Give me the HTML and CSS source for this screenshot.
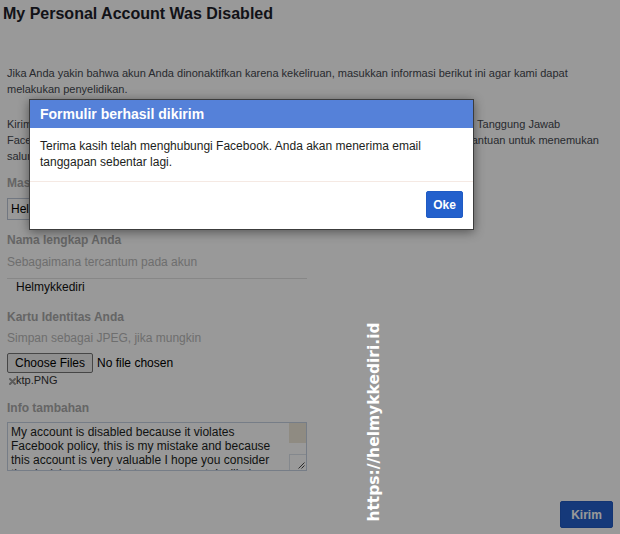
FILE: index.html
```html
<!DOCTYPE html>
<html lang="id">
<head>
<meta charset="utf-8">
<title>My Personal Account Was Disabled</title>
<link rel="stylesheet" href="styles.css">
</head>
<body>
<div class="page">
  <h1 class="title">My Personal Account Was Disabled</h1>
  <p class="intro">Jika Anda yakin bahwa akun Anda dinonaktifkan karena kekeliruan, masukkan informasi berikut ini agar kami dapat melakukan penyelidikan.</p>
  <p class="intro second">Kirimkan formulir ini hanya jika akun Anda dinonaktifkan karena melanggar Pernyataan Hak dan Tanggung Jawab<br>Facebook. Jika Anda tidak bisa masuk ke akun Anda karena alasan yang lain, kunjungi Pusat Bantuan untuk menemukan<br>saluran yang tepat untuk masalah Anda.</p>
  <form class="form">
    <div class="label first">Masukkan email atau nomor ponsel log in</div>
    <input class="text-input" type="text" value="Helmykkediri@gmail.com">
    <div class="label">Nama lengkap Anda</div>
    <div class="hint">Sebagaimana tercantum pada akun</div>
    <div class="plain-field">Helmykkediri</div>
    <div class="label gap-b">Kartu Identitas Anda</div>
    <div class="hint tight">Simpan sebagai JPEG, jika mungkin</div>
    <div class="file-row">
      <button type="button" class="file-btn">Choose Files</button>
      <span class="file-status">No file chosen</span>
    </div>
    <div class="attachment"><svg class="remove" width="7" height="7" viewBox="0 0 7 7"><path d="M1 1L6 6M6 1L1 6" stroke="#9a9a9a" stroke-width="2" stroke-linecap="round"/></svg>ktp.PNG</div>
    <div class="label gap-c">Info tambahan</div>
    <div class="textarea-wrap">
      <textarea class="textarea">My account is disabled because it violates Facebook policy, this is my mistake and because this account is very valuable I hope you consider the decision to reactivate my account, I will obey the rules.</textarea>
      <span class="scroll-thumb"></span>
      <span class="resize-grip"><svg width="16" height="15" viewBox="0 0 16 15"><path d="M8.5 13.5L14.5 7.5M11.5 13.5L14.5 10.5" stroke="#4a4a4a" stroke-width="1"/></svg></span>
    </div>
    <div class="actions"><button type="button" class="submit">Kirim</button></div>
  </form>
</div>

<div class="overlay"></div>

<div class="dialog">
  <div class="dialog-header">Formulir berhasil dikirim</div>
  <div class="dialog-body">Terima kasih telah menghubungi Facebook. Anda akan menerima email tanggapan sebentar lagi.</div>
  <div class="dialog-footer"><button type="button" class="ok">Oke</button></div>
</div>

<div class="watermark">https://helmykkediri.id</div>
</body>
</html>
```

FILE: styles.css
```css
html, body {
  margin: 0;
  padding: 0;
  background: #ffffff;
}

body {
  font-family: "Liberation Sans", Arial, sans-serif;
  font-size: 12px;
  line-height: 16px;
  color: #1d2129;
  width: 620px;
  height: 534px;
  overflow: hidden;
  position: relative;
}

.page {
  padding: 0 7px;
}

.title {
  margin: 0 0 0 -4px;
  padding-top: 4px;
  font-size: 16px;
  line-height: 19px;
  font-weight: bold;
  color: #1d2129;
}

.intro {
  margin: 42px 0 0;
  font-size: 11px;
  line-height: 16px;
  color: #44484f;
}

.intro.second {
  margin-top: 19px;
}

.form {
  margin: 0;
}

.label {
  margin-top: 12px;
  font-weight: bold;
  font-size: 12px;
  line-height: 16px;
  color: #a9a9a9;
}

.label.first {
  margin-top: 11px;
}

.label.gap-b {
  margin-top: 10px;
}

.label.gap-c {
  margin-top: 13px;
}

.hint {
  margin-top: 6px;
  font-size: 12px;
  line-height: 16px;
  color: #b8b8b8;
}

.hint.tight {
  margin-top: 5px;
}

.text-input {
  display: block;
  box-sizing: border-box;
  margin: 7px 0 0;
  width: 300px;
  height: 22px;
  padding: 0 3px;
  border: 1px solid #bdc7d8;
  border-radius: 0;
  font-family: "Liberation Sans", Arial, sans-serif;
  font-size: 12px;
  color: #000000;
  background: #ffffff;
  outline: none;
}

.plain-field {
  box-sizing: border-box;
  margin-top: 8px;
  width: 300px;
  padding: 0 0 4px 9px;
  border-top: 1px solid #e2e2e2;
  font-size: 12px;
  line-height: 16px;
  color: #111111;
}

.file-row {
  margin-top: 7px;
  display: flex;
  align-items: center;
  gap: 4px;
  height: 20px;
}

.file-btn {
  box-sizing: border-box;
  height: 20px;
  margin: 0;
  padding: 0 7px;
  border: 1px solid #767676;
  border-radius: 2px;
  background: #efefef;
  font-family: "Liberation Sans", Arial, sans-serif;
  font-size: 12px;
  line-height: 18px;
  color: #000000;
}

.file-status {
  font-size: 12px;
  color: #000000;
}

.attachment {
  display: flex;
  align-items: center;
  height: 14px;
  font-size: 11px;
  line-height: 14px;
  color: #333333;
  padding-left: 2px;
}

.remove {
  display: block;
  margin: 2px 0 0 0;
}

.textarea-wrap {
  position: relative;
  margin-top: 6px;
  width: 300px;
  height: 49px;
}

.textarea {
  display: block;
  box-sizing: border-box;
  width: 300px;
  height: 49px;
  margin: 0;
  padding: 2px 20px 2px 3px;
  border: 1px solid #c5d0e2;
  border-radius: 0;
  resize: none;
  overflow: hidden;
  font-family: "Liberation Sans", Arial, sans-serif;
  font-size: 12px;
  line-height: 14px;
  color: #1c1e21;
  background: #ffffff;
}

.scroll-thumb {
  position: absolute;
  top: 1px;
  right: 1px;
  width: 17px;
  height: 20px;
  background: #efe8d9;
}

.resize-grip {
  position: absolute;
  right: 1px;
  bottom: 1px;
  width: 16px;
  height: 15px;
  border-left: 1px solid #dde3ec;
  border-top: 1px solid #dde3ec;
}

.resize-grip svg {
  display: block;
}

.actions {
  margin-top: 30px;
  display: flex;
  justify-content: flex-end;
}

.submit {
  box-sizing: border-box;
  height: 27px;
  width: 53px;
  margin: 0;
  padding: 0;
  border: 1px solid #2159c0;
  border-radius: 2px;
  background: #2360cc;
  color: #ffffff;
  font-family: "Liberation Sans", Arial, sans-serif;
  font-size: 12px;
  font-weight: bold;
}

.overlay {
  position: absolute;
  inset: 0;
  background: rgba(0, 0, 0, 0.4);
}

.dialog {
  position: absolute;
  left: 29px;
  top: 99px;
  width: 445px;
  box-sizing: border-box;
  border: 1px solid #3c3c3c;
  background: #ffffff;
  box-shadow: 0 2px 10px rgba(0, 0, 0, 0.45);
}

.dialog-header {
  height: 28px;
  padding: 0 10px;
  background: #5581d9;
  color: #ffffff;
  font-size: 14px;
  font-weight: bold;
  line-height: 28px;
}

.dialog-body {
  padding: 10px 10px 11px;
  font-size: 12px;
  line-height: 16px;
  color: #1c1e21;
}

.dialog-footer {
  display: flex;
  justify-content: flex-end;
  padding: 9px 10px 11px;
  border-top: 1px solid #f5e9e3;
}

.ok {
  box-sizing: border-box;
  width: 37px;
  height: 27px;
  margin: 0;
  padding: 0;
  border: 1px solid #1f5bc4;
  border-radius: 2px;
  background: #2360cc;
  color: #ffffff;
  font-family: "Liberation Sans", Arial, sans-serif;
  font-size: 12px;
  font-weight: bold;
}

.watermark {
  position: absolute;
  left: 274px;
  top: 414px;
  width: 200px;
  text-align: center;
  white-space: nowrap;
  font-family: "DejaVu Sans", sans-serif;
  font-weight: bold;
  font-size: 15.5px;
  line-height: 16px;
  color: #ffffff;
  transform: rotate(-90deg);
}
```
